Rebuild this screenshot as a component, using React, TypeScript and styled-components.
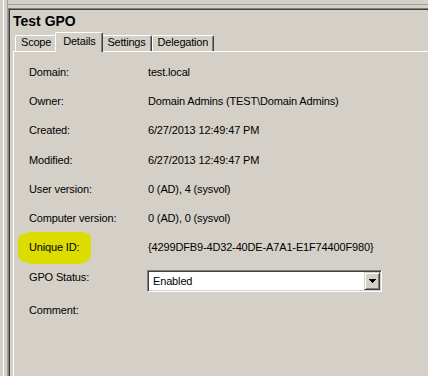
import styled, { createGlobalStyle } from 'styled-components'

const GlobalStyle = createGlobalStyle`
  html, body {
    margin: 0;
    padding: 0;
  }
  body {
    background: #d4d0c8;
    overflow: hidden;
    font-family: 'Liberation Sans', Arial, sans-serif;
    color: #000;
  }
`

const details: { label: string; value: string; mark?: boolean }[] = [
  { label: 'Domain:', value: 'test.local' },
  { label: 'Owner:', value: 'Domain Admins (TEST\\Domain Admins)' },
  { label: 'Created:', value: '6/27/2013 12:49:47 PM' },
  { label: 'Modified:', value: '6/27/2013 12:49:47 PM' },
  { label: 'User version:', value: '0 (AD), 4 (sysvol)' },
  { label: 'Computer version:', value: '0 (AD), 0 (sysvol)' },
  { label: 'Unique ID:', value: '{4299DFB9-4D32-40DE-A7A1-E1F74400F980}', mark: true },
]

const tabs = ['Scope', 'Details', 'Settings', 'Delegation']

export default function App() {
  return (
    <Window>
      <GlobalStyle />
      <Splitter />
      <Main>
        <TopEdge />
        <Frame>
          <Title>Test GPO</Title>
          <TabStrip>
            {tabs.map((t) => (
              <Tab key={t} $active={t === 'Details'}>
                {t}
              </Tab>
            ))}
          </TabStrip>
          <TabPanel>
            <DetailGrid>
              {details.map((d) => (
                <Row key={d.label}>
                  <Label>{d.mark ? <Marker>{d.label}</Marker> : d.label}</Label>
                  <Value>{d.value}</Value>
                </Row>
              ))}
              <Row>
                <Label>GPO Status:</Label>
                <Select>
                  <SelectText>Enabled</SelectText>
                  <DropButton>
                    <svg width="7" height="4" viewBox="0 0 7 4" shapeRendering="crispEdges">
                      <rect x="0" y="0" width="7" height="1" fill="#000" />
                      <rect x="1" y="1" width="5" height="1" fill="#000" />
                      <rect x="2" y="2" width="3" height="1" fill="#000" />
                      <rect x="3" y="3" width="1" height="1" fill="#000" />
                    </svg>
                  </DropButton>
                </Select>
              </Row>
              <Row>
                <Label>Comment:</Label>
              </Row>
            </DetailGrid>
          </TabPanel>
        </Frame>
      </Main>
    </Window>
  )
}

const Window = styled.div`
  display: flex;
  width: 428px;
  height: 376px;
  overflow: hidden;
  background: #d4d0c8;
`

const Splitter = styled.div`
  width: 8px;
  flex-shrink: 0;
  background: linear-gradient(
    to right,
    #d4d0c8 0 3px,
    #ffffff 3px 4px,
    #d4d0c8 4px 7px,
    #a0a0a0 7px 8px
  );
`

const Main = styled.div`
  flex: 1;
  display: flex;
  flex-direction: column;
  min-width: 0;
`

const TopEdge = styled.div`
  height: 8px;
  flex-shrink: 0;
  background: linear-gradient(to bottom, #d4d0c8 0 4px, #a0a0a0 4px 5px, #d4d0c8 5px);
`

const Frame = styled.div`
  flex: 1;
  display: flex;
  flex-direction: column;
  border-top: 1px solid #808080;
  border-left: 1px solid #808080;
  box-shadow: inset 1px 1px 0 #404040;
  padding: 4px 0 0 4px;
`

const Title = styled.div`
  height: 16px;
  line-height: 16px;
  font-size: 14px;
  font-weight: bold;
  margin-bottom: 3px;
`

const TabStrip = styled.div`
  display: flex;
  align-items: flex-end;
  padding-left: 2px;
  position: relative;
  z-index: 1;
`

const Tab = styled.div<{ $active?: boolean }>`
  box-sizing: border-box;
  height: ${(p) => (p.$active ? '20px' : '16px')};
  margin: ${(p) => (p.$active ? '0 -2px -1px' : '0')};
  padding: ${(p) => (p.$active ? '2px 7px 0' : '0 5px')};
  position: relative;
  z-index: ${(p) => (p.$active ? 2 : 1)};
  background: #d4d0c8;
  border-top: 1px solid #ffffff;
  border-left: 1px solid #ffffff;
  border-right: 1px solid #404040;
  border-radius: 2px 2px 0 0;
  box-shadow: inset -1px 0 0 #808080;
  font-size: 11px;
  line-height: 13px;
  letter-spacing: -0.2px;
  white-space: nowrap;
`

const TabPanel = styled.div`
  flex: 1;
  border-top: 1px solid #ffffff;
  border-left: 1px solid #ffffff;
  padding: 5.5px 0 0 15px;
`

const DetailGrid = styled.div`
  display: grid;
  grid-template-columns: 119px 1fr;
  grid-template-rows: repeat(8, 29.3px) 36.6px;
`

const Row = styled.div`
  display: contents;
`

const Label = styled.div`
  align-self: center;
  font-size: 11px;
  line-height: 13px;
  letter-spacing: -0.15px;
  white-space: nowrap;
`

const Marker = styled.span`
  display: inline-block;
  padding: 9px 12px 10px 11px;
  margin: -9px -12px -10px -11px;
  background: #dcdc00;
  border-radius: 14px 9px 12px 16px / 8px 6px 10px 9px;
`

const Value = styled.div`
  align-self: center;
  font-size: 11px;
  line-height: 13px;
  letter-spacing: -0.15px;
  white-space: nowrap;
`

const Select = styled.div`
  align-self: end;
  box-sizing: border-box;
  display: flex;
  align-items: stretch;
  width: 235px;
  height: 22px;
  margin-left: -1px;
  background: #ffffff;
  border: 1px solid;
  border-color: #808080 #ffffff #ffffff #808080;
  box-shadow: inset 1px 1px 0 #404040, inset -1px -1px 0 #d4d0c8;
  padding: 1px;
`

const SelectText = styled.div`
  flex: 1;
  display: flex;
  align-items: center;
  padding-left: 4px;
  font-size: 11px;
  letter-spacing: -0.15px;
`

const DropButton = styled.div`
  box-sizing: border-box;
  width: 16px;
  display: flex;
  align-items: center;
  justify-content: center;
  background: #d4d0c8;
  border: 1px solid;
  border-color: #d4d0c8 #404040 #404040 #d4d0c8;
  box-shadow: inset 1px 1px 0 #ffffff, inset -1px -1px 0 #808080;
`
